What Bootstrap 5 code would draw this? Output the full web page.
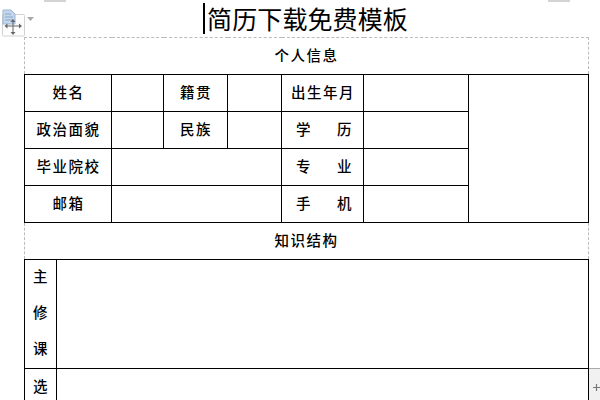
<!DOCTYPE html>
<html lang="zh">
<head>
<meta charset="utf-8">
<title>简历下载免费模板</title>
<link rel="stylesheet" href="https://cdn.jsdelivr.net/npm/bootstrap@5.3.0/dist/css/bootstrap.min.css">
<style>
html,body{width:600px;height:400px;overflow:hidden;background:#fff;}
body{font-family:"Noto Sans CJK SC","Liberation Sans",sans-serif;color:#000;position:relative;}
.doc-page{padding-left:24px;width:589px;}
.doc-title{height:37px;width:565px;}
.doc-title-text{font-size:25px;line-height:31px;font-weight:400;border-left:2px solid #000;padding-left:2px;padding-right:2px;margin:0;letter-spacing:.1px;}
.doc-grid{table-layout:fixed;border-collapse:collapse;width:564px;}
.doc-grid td{border:1px solid #000;padding:0 0 4px 1px;height:37px;font-size:14.5px;letter-spacing:1.5px;font-weight:500;text-align:center;vertical-align:middle;line-height:31px;white-space:nowrap;}
.doc-grid td.sect{border:0;border-left:1px dashed #bbb;border-right:1px dashed #bbb;padding-left:0;}
.doc-grid tr.first-sect td.sect{border-top:1px dashed #bbb;}
.doc-grid td.tall{height:109px;line-height:36px;padding:0 0 0 1px;}
.doc-grid td.last-row{height:32px;line-height:28px;padding:3px 0 0 1px;vertical-align:top;}
.doc-grid td.wide-sp{letter-spacing:26.5px;padding-left:14px;text-align:left;}
.stack-cell{display:flex;flex-direction:column;align-items:center;margin:-2px 0 2px;}
.ruler-mark{position:absolute;top:0;height:2px;width:22px;background:#d4d4d4;}
.move-handle{position:absolute;left:2px;top:9px;}
.handle-caret{position:absolute;left:27px;top:17px;}
.corner-add{position:absolute;left:589px;top:368px;width:11px;height:32px;background:#f1f1f1;border-top:1px solid #aaa;}
.corner-add svg{position:absolute;left:4px;top:15px;}
</style>
</head>
<body>
<div class="doc-page">
  <div class="doc-title d-flex justify-content-center align-items-center">
    <h1 class="doc-title-text">简历下载免费模板</h1>
  </div>
  <table class="doc-grid">
    <colgroup>
      <col style="width:32px"><col style="width:55px"><col style="width:52px"><col style="width:64px">
      <col style="width:54px"><col style="width:82px"><col style="width:105px"><col style="width:120px">
    </colgroup>
    <tr class="first-sect"><td class="sect" colspan="8">个人信息</td></tr>
    <tr>
      <td colspan="2">姓名</td><td></td><td>籍贯</td><td></td><td>出生年月</td><td></td><td rowspan="4"></td>
    </tr>
    <tr>
      <td colspan="2">政治面貌</td><td></td><td>民族</td><td></td><td class="wide-sp">学历</td><td></td>
    </tr>
    <tr>
      <td colspan="2">毕业院校</td><td colspan="3"></td><td class="wide-sp">专业</td><td></td>
    </tr>
    <tr>
      <td colspan="2">邮箱</td><td colspan="3"></td><td class="wide-sp">手机</td><td></td>
    </tr>
    <tr><td class="sect" colspan="8">知识结构</td></tr>
    <tr>
      <td class="tall"><div class="stack-cell"><span>主</span><span>修</span><span>课</span></div></td>
      <td class="tall" colspan="7"></td>
    </tr>
    <tr>
      <td class="last-row">选</td>
      <td class="last-row" colspan="7"></td>
    </tr>
  </table>
</div>

<div class="ruler-mark" style="left:44px"></div>
<div class="ruler-mark" style="left:548px"></div>

<svg class="move-handle" width="23" height="28" viewBox="0 0 23 28" aria-hidden="true">
  <rect x="0.5" y="5.5" width="22" height="21.5" rx="1" fill="#fdfdfd" stroke="#d2d2d2"/>
  <path d="M1 1h8l4 4v10H1z" fill="#c3d6ec" stroke="#9db5d2"/>
  <path d="M3 5h6M3 8h8M3 11h8" stroke="#8aa8ca"/>
  <path d="M5 17h12M11 12v11" stroke="#666" stroke-width="1" fill="none"/>
  <path d="M11 10l-2.500 3h5zM11 26l-2.500-3h5zM2.500 17l3-2.500v5zM20 17l-3-2.500v5z" fill="#666"/>
</svg>
<svg class="handle-caret" width="7" height="4" viewBox="0 0 7 4" aria-hidden="true"><path d="M0 0h7L3.500 4z" fill="#a8a8a8"/></svg>
<div class="corner-add">
  <svg width="7" height="7" viewBox="0 0 7 7" aria-hidden="true"><path d="M0 3.500h7M3.500 0v7" stroke="#777" stroke-width="1.2"/></svg>
</div>
</body>
</html>
